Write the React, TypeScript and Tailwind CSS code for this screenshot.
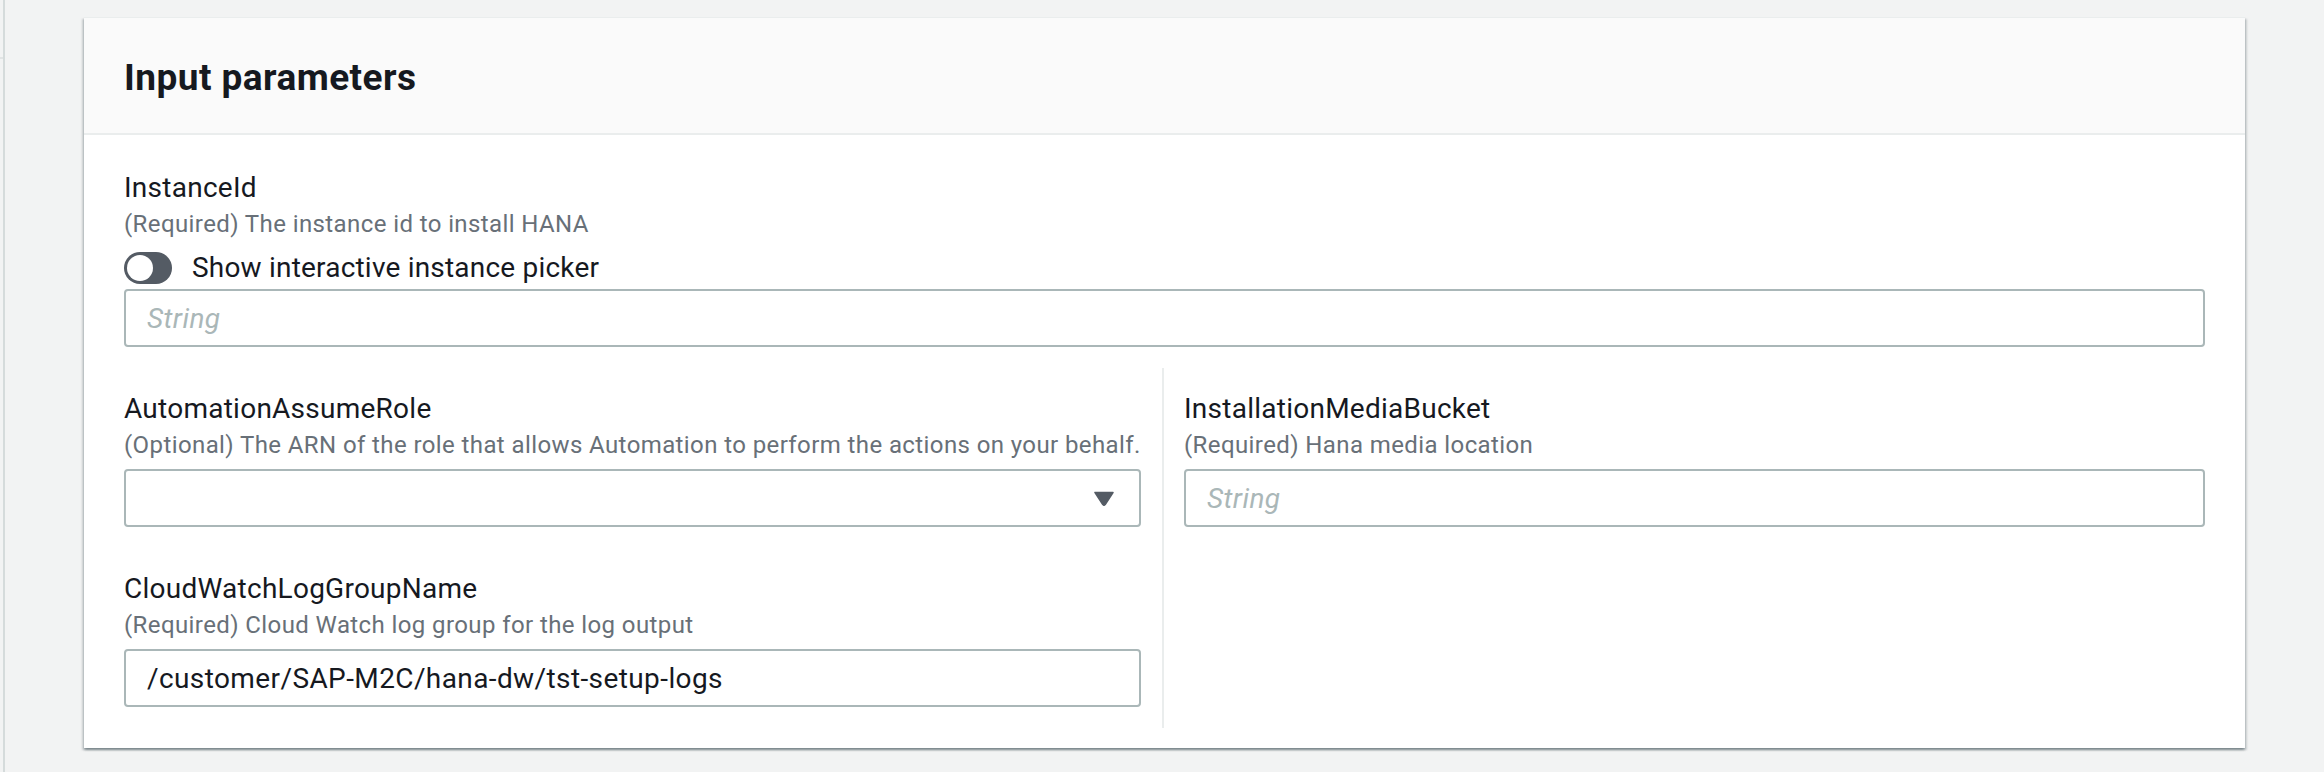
import React, { useState } from 'react';

const FONT = "font-['Roboto','Liberation_Sans',sans-serif]";

interface FieldProps {
  label: string;
  description: string;
  children: React.ReactNode;
}

const Field: React.FC<FieldProps> = ({ label, description, children }) => (
  <div className="flex flex-col">
    <div className="text-[28px] leading-[40px] tracking-[0.25px] text-[#16191f]">{label}</div>
    <div className="text-[24px] leading-[32px] tracking-[0.4px] text-[#687078]">{description}</div>
    {children}
  </div>
);

const TextInput: React.FC<{ value?: string; placeholder?: string; className?: string }> = ({
  value = '',
  placeholder = 'String',
  className = '',
}) => {
  const [text, setText] = useState(value);
  return (
    <input
      value={text}
      onChange={(e) => setText(e.target.value)}
      placeholder={placeholder}
      className={`h-[58px] w-full rounded-[4px] border-2 border-[#aab7b8] bg-white pl-[21px] pr-[20px] text-[28px] tracking-[0.4px] text-[#16191f] outline-none placeholder:italic placeholder:text-[#aab7b8] ${FONT} ${className}`}
    />
  );
};

const Toggle: React.FC<{ label: string }> = ({ label }) => {
  const [on, setOn] = useState(false);
  return (
    <div className="mt-[8px] flex h-[40px] items-center gap-[20px]">
      <button
        onClick={() => setOn(!on)}
        className={`flex h-[32px] w-[48px] items-center rounded-full px-[3px] ${
          on ? 'justify-end bg-[#0073bb]' : 'justify-start bg-[#545b64]'
        }`}
      >
        <span className="block h-[26px] w-[26px] rounded-full bg-white" />
      </button>
      <span className="text-[28px] leading-[40px] tracking-[0.2px] text-[#16191f]">{label}</span>
    </div>
  );
};

const SelectBox: React.FC = () => (
  <div className="mt-[8px] flex h-[58px] w-full items-center justify-end rounded-[4px] border-2 border-[#aab7b8] bg-white pr-[25px]">
    <svg width="20" height="15" viewBox="0 0 20 15">
      <path d="M1 1.5 H19 L11.2 13.6 Q10 15 8.8 13.6 Z" fill="#545b64" stroke="#545b64" strokeLinejoin="round" strokeWidth="1.5" />
    </svg>
  </div>
);

export default function App() {
  return (
    <div className={`flex h-[772px] w-full bg-[#f2f3f3] ${FONT}`}>
      {/* collapsed side strip */}
      <div className="relative h-full w-[5px] shrink-0 border-r-2 border-[#d5dbdb] bg-[#f2f3f3]">
        <div className="absolute left-0 top-[57px] h-[2px] w-[3px] bg-[#e1e4e4]" />
      </div>

      <div className="flex-1 pl-[79px] pr-[79px] pt-[17px]">
        <div className="border-t border-[#eaeded] bg-white shadow-[0_2px_2px_0_rgba(0,28,36,0.3),2px_2px_2px_0_rgba(0,28,36,0.15),-2px_2px_2px_0_rgba(0,28,36,0.15)]">
          <div className="flex h-[117px] items-center border-b-2 border-[#eaeded] bg-[#fafafa] px-[40px] pt-[4px]">
            <h2 className="text-[37px] font-bold leading-[48px] tracking-[0.45px] text-[#16191f]">Input parameters</h2>
          </div>

          <div className="px-[40px] pb-[20px] pt-[33px]">
            <Field label="InstanceId" description="(Required) The instance id to install HANA">
              <Toggle label="Show interactive instance picker" />
              <TextInput className="mt-[1px]" />
            </Field>

            <div className="mt-[21px] flex">
              <div className="flex w-[1038px] shrink-0 flex-col gap-[42px] pr-[21px] pb-[21px] pt-[21px]">
                <Field
                  label="AutomationAssumeRole"
                  description="(Optional) The ARN of the role that allows Automation to perform the actions on your behalf."
                >
                  <SelectBox />
                </Field>
                <Field
                  label="CloudWatchLogGroupName"
                  description="(Required) Cloud Watch log group for the log output"
                >
                  <TextInput className="mt-[8px]" value="/customer/SAP-M2C/hana-dw/tst-setup-logs" />
                </Field>
              </div>
              <div className="flex-1 border-l-2 border-[#eaeded] pl-[20px] pt-[21px]">
                <Field label="InstallationMediaBucket" description="(Required) Hana media location">
                  <TextInput className="mt-[8px]" />
                </Field>
              </div>
            </div>
          </div>
        </div>
      </div>
    </div>
  );
}
